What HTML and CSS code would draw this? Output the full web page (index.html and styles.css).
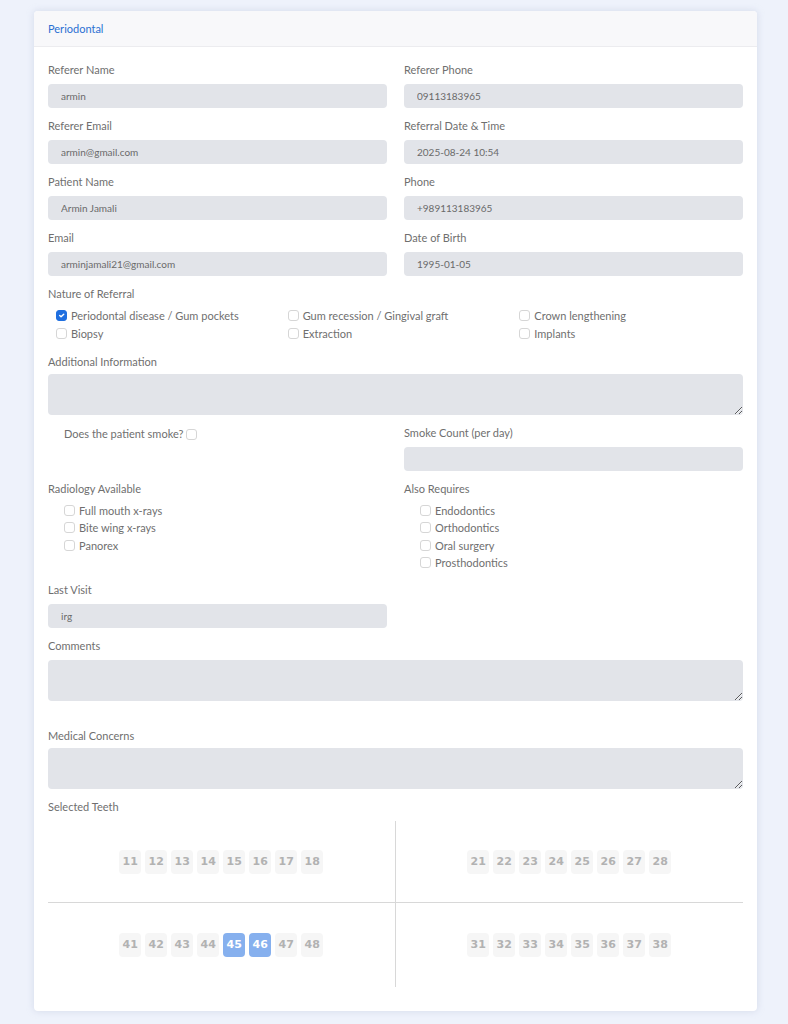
FILE: index.html
```html
<!DOCTYPE html>
<html>
<head>
	<meta charset="utf-8">
	<meta name="viewport" content="width=device-width, initial-scale=1">
	<title>Periodontal Referral</title>
	<link rel="stylesheet" href="styles.css">
</head>
<body>

	<div class="card">
		<div class="card-header">Periodontal</div>

		<div class="card-body">
			<div class="row">
				<div class="field">
					<label>Referer Name</label>
					<input type="text" class="input" value="armin" readonly>
				</div>
				<div class="field">
					<label>Referer Phone</label>
					<input type="text" class="input" value="09113183965" readonly>
				</div>
				<div class="field">
					<label>Referer Email</label>
					<input type="text" class="input" value="armin@gmail.com" readonly>
				</div>
				<div class="field">
					<label>Referral Date &amp; Time</label>
					<input type="text" class="input" value="2025-08-24 10:54" readonly>
				</div>
				<div class="field">
					<label>Patient Name</label>
					<input type="text" class="input" value="Armin Jamali" readonly>
				</div>
				<div class="field">
					<label>Phone</label>
					<input type="text" class="input" value="+989113183965" readonly>
				</div>
				<div class="field">
					<label>Email</label>
					<input type="text" class="input" value="arminjamali21@gmail.com" readonly>
				</div>
				<div class="field">
					<label>Date of Birth</label>
					<input type="text" class="input" value="1995-01-05" readonly>
				</div>
			</div>

			<div class="field">
				<label>Nature of Referral</label>
				<div class="checks three">
					<div class="check"><input type="checkbox" checked><span>Periodontal disease / Gum pockets</span></div>
					<div class="check"><input type="checkbox"><span>Gum recession / Gingival graft</span></div>
					<div class="check"><input type="checkbox"><span>Crown lengthening</span></div>
					<div class="check"><input type="checkbox"><span>Biopsy</span></div>
					<div class="check"><input type="checkbox"><span>Extraction</span></div>
					<div class="check"><input type="checkbox"><span>Implants</span></div>
				</div>
			</div>

			<div class="field">
				<label class="tight">Additional Information</label>
				<textarea class="input area"></textarea>
			</div>

			<div class="row">
				<div class="field">
					<div class="smoke"><span>Does the patient smoke?</span><input type="checkbox"></div>
				</div>
				<div class="field">
					<label>Smoke Count (per day)</label>
					<input type="text" class="input">
				</div>
				<div class="field">
					<label>Radiology Available</label>
					<div class="checks indent">
						<div class="check"><input type="checkbox"><span>Full mouth x-rays</span></div>
						<div class="check"><input type="checkbox"><span>Bite wing x-rays</span></div>
						<div class="check"><input type="checkbox"><span>Panorex</span></div>
					</div>
				</div>
				<div class="field">
					<label>Also Requires</label>
					<div class="checks indent">
						<div class="check"><input type="checkbox"><span>Endodontics</span></div>
						<div class="check"><input type="checkbox"><span>Orthodontics</span></div>
						<div class="check"><input type="checkbox"><span>Oral surgery</span></div>
						<div class="check"><input type="checkbox"><span>Prosthodontics</span></div>
					</div>
				</div>
				<div class="field">
					<label>Last Visit</label>
					<input type="text" class="input" value="irg" readonly>
				</div>
			</div>

			<div class="field wide-gap">
				<label>Comments</label>
				<textarea class="input area"></textarea>
			</div>

			<div class="field">
				<label class="tight">Medical Concerns</label>
				<textarea class="input area"></textarea>
			</div>

			<div class="field last">
				<label>Selected Teeth</label>
				<div class="teeth-chart">
					<div class="quadrant upper left">
						<span class="tooth">11</span><span class="tooth">12</span><span class="tooth">13</span><span class="tooth">14</span><span class="tooth">15</span><span class="tooth">16</span><span class="tooth">17</span><span class="tooth">18</span>
					</div>
					<div class="quadrant upper">
						<span class="tooth">21</span><span class="tooth">22</span><span class="tooth">23</span><span class="tooth">24</span><span class="tooth">25</span><span class="tooth">26</span><span class="tooth">27</span><span class="tooth">28</span>
					</div>
					<div class="quadrant left">
						<span class="tooth">41</span><span class="tooth">42</span><span class="tooth">43</span><span class="tooth">44</span><span class="tooth selected">45</span><span class="tooth selected">46</span><span class="tooth">47</span><span class="tooth">48</span>
					</div>
					<div class="quadrant">
						<span class="tooth">31</span><span class="tooth">32</span><span class="tooth">33</span><span class="tooth">34</span><span class="tooth">35</span><span class="tooth">36</span><span class="tooth">37</span><span class="tooth">38</span>
					</div>
				</div>
			</div>
		</div>
	</div>

</body>
</html>
```

FILE: styles.css
```css
*{
    margin: 0;
    padding: 0;
    box-sizing: border-box;
}
body{
    background-color: #eef2fb;
    padding: 11px 31px 13px 34px;
    font-family: Lato, 'Noto Sans', sans-serif;
    color: #6f6f6f;
}
.card{
    background-color: #fff;
    border-radius: 4px;
    box-shadow: 0 0 6px 1px rgba(180, 190, 215, 0.35);
}
.card-header{
    height: 36px;
    line-height: 36px;
    padding: 0 14px;
    background-color: #f8f8fa;
    border-bottom: 1px solid #ececef;
    border-radius: 4px 4px 0 0;
    color: #2b70d3;
    font-size: 11px;
}
.card-body{
    padding: 16px 14px 24px;
}
.row{
    display: grid;
    grid-template-columns: 1fr 1fr;
    column-gap: 17px;
}
.field{
    margin-bottom: 11px;
}
.field.last{
    margin-bottom: 0;
}
.field label{
    display: block;
    font-size: 11px;
    line-height: 14px;
    margin-bottom: 7px;
}
.field label.tight{
    margin-bottom: 5px;
}
.input{
    display: block;
    width: 100%;
    height: 24px;
    border: none;
    outline: none;
    border-radius: 4px;
    background-color: #e2e4e9;
    padding: 0 13px;
    font-family: Lato, 'Noto Sans', sans-serif;
    font-size: 10px;
    color: #6a6a6a;
}
.area{
    height: 41px;
    resize: vertical;
    padding-top: 6px;
}
.wide-gap{
    margin-bottom: 28px;
}
.checks.three{
    display: grid;
    grid-template-columns: repeat(3, 1fr);
    margin-top: -1px;
    padding-bottom: 2px;
}
.checks.indent{
    padding-left: 8px;
    margin-top: -1px;
    padding-bottom: 1px;
}
.check{
    display: flex;
    align-items: center;
    padding-left: 8px;
    font-size: 11px;
    line-height: 17.3px;
}
.checks.three .check{
    line-height: 17.5px;
}
input[type=checkbox]{
    appearance: none;
    -webkit-appearance: none;
    width: 11px;
    height: 11px;
    border: 1px solid #d6d6d6;
    border-radius: 3px;
    background-color: #fff;
    margin-right: 4px;
    flex-shrink: 0;
}
input[type=checkbox]:checked{
    background-color: #1f6fe0;
    border-color: #1f6fe0;
    background-image: url("data:image/svg+xml,%3Csvg xmlns='http://www.w3.org/2000/svg' viewBox='0 0 20 20'%3E%3Cpath fill='none' stroke='%23fff' stroke-linecap='round' stroke-linejoin='round' stroke-width='3' d='M6 10l3 3 6-6'/%3E%3C/svg%3E");
    background-size: 100% 100%;
}
.smoke{
    display: flex;
    align-items: center;
    padding-left: 16px;
    padding-top: 1px;
    font-size: 11px;
    line-height: 14px;
}
.smoke span{
    margin-right: 3px;
}
.teeth-chart{
    display: grid;
    grid-template-columns: 1fr 1fr;
    grid-template-rows: 82px 84px;
}
.quadrant{
    display: flex;
    justify-content: center;
    align-items: center;
    gap: 4px;
}
.quadrant.upper{
    border-bottom: 1px solid #d8d8d8;
}
.quadrant.left{
    border-right: 1px solid #d8d8d8;
}
.tooth{
    width: 22px;
    height: 24px;
    line-height: 24px;
    text-align: center;
    border-radius: 4px;
    background-color: #f6f6f6;
    color: #b2b2b2;
    font-family: 'DejaVu Sans', sans-serif;
    font-weight: bold;
    font-size: 11px;
}
.tooth.selected{
    background-color: #86b0ee;
    color: #fff;
}
```
